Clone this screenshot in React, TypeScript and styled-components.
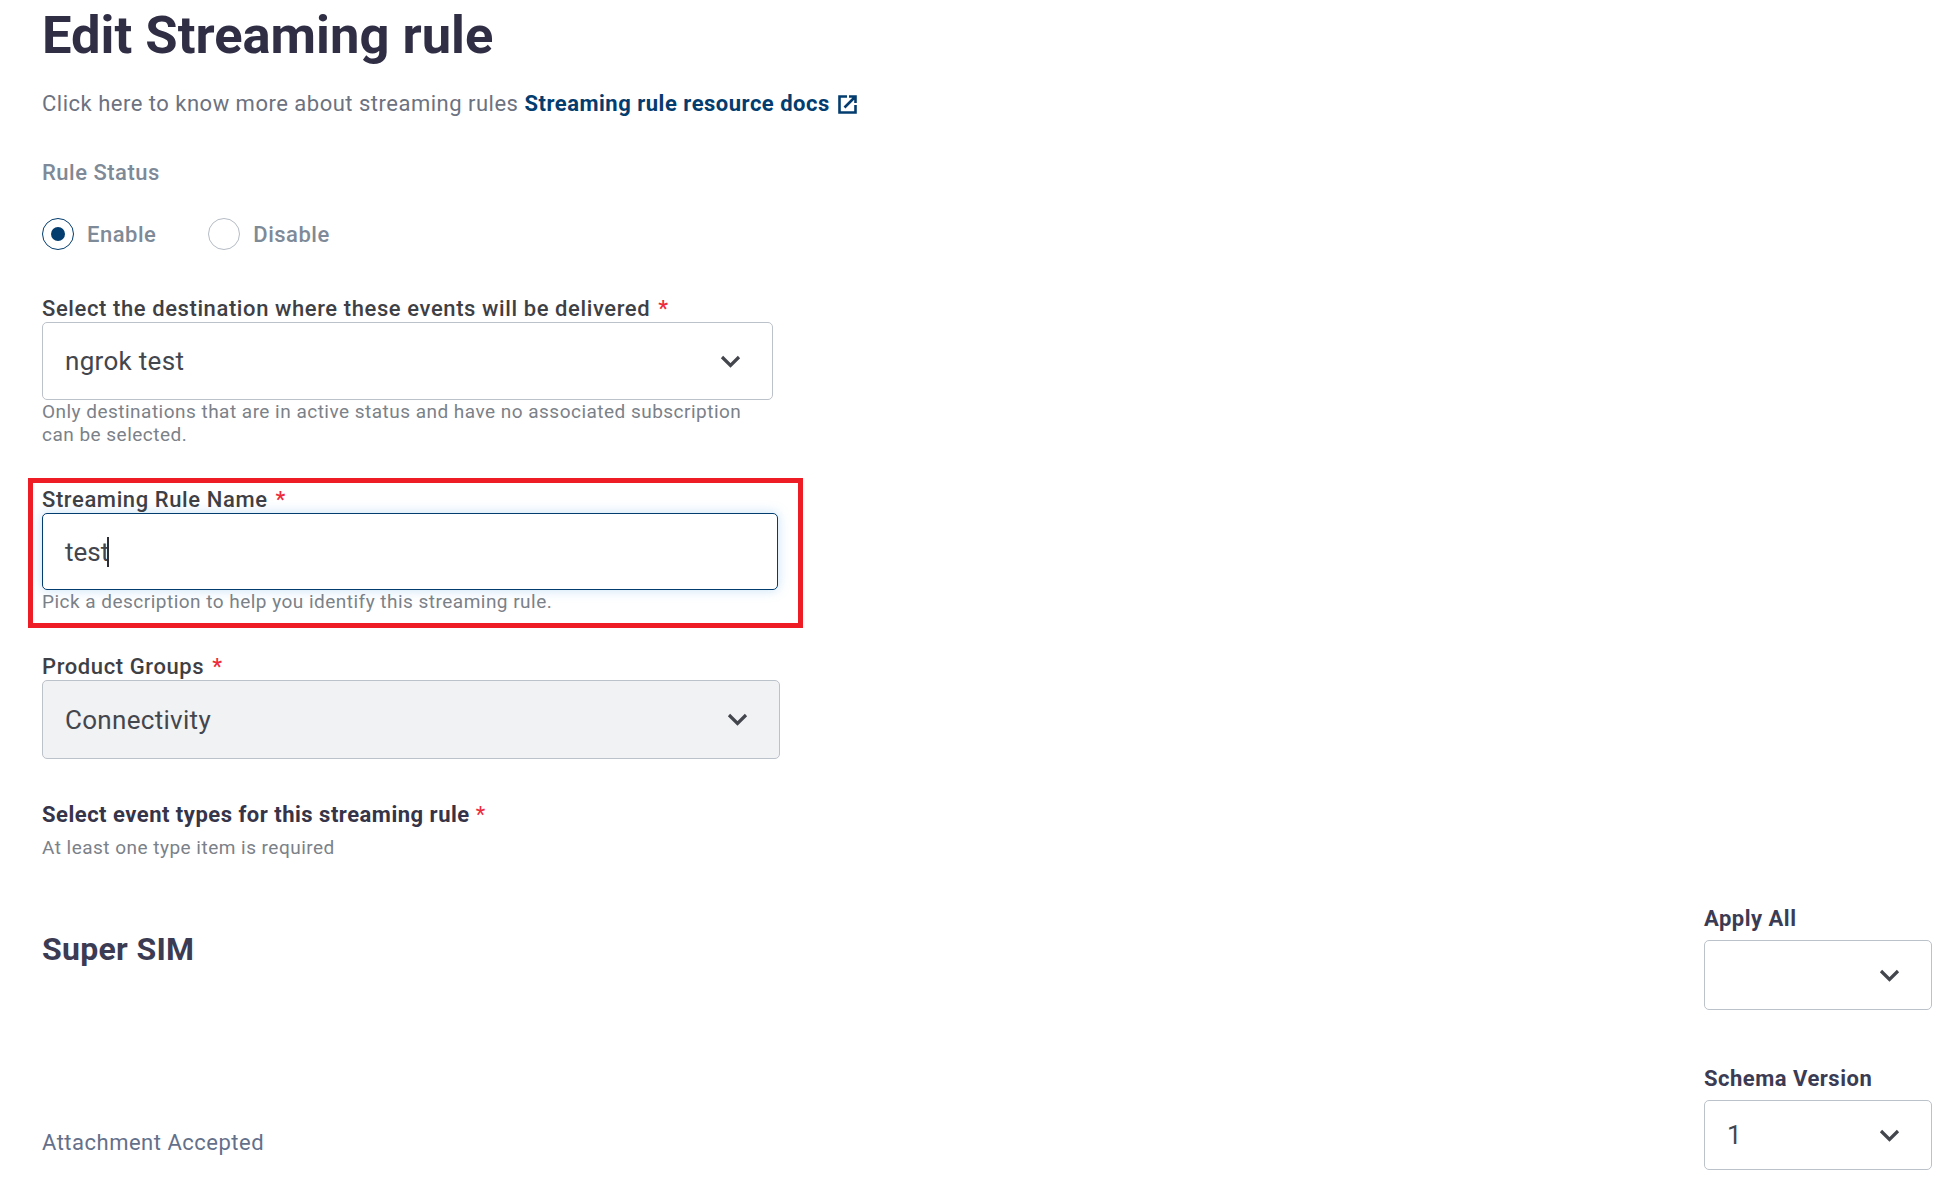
import React from 'react';
import styled, { createGlobalStyle } from 'styled-components';

const GlobalStyle = createGlobalStyle`
  html, body {
    margin: 0;
    padding: 0;
    background: #fff;
    overflow: hidden;
    font-family: Roboto, "Liberation Sans", sans-serif;
  }
`;

const Page = styled.div`
  height: 1181px;
  padding: 0 20px 0 42px;
  box-sizing: border-box;
  overflow: hidden;
`;

const Title = styled.h1`
  margin: 0;
  padding-top: 7px;
  font-size: 52.5px;
  line-height: 56px;
  font-weight: 700;
  color: #2f2e45;
`;

const Intro = styled.p`
  margin: 26px 0 0;
  display: flex;
  align-items: center;
  font-size: 22px;
  line-height: 30px;
  letter-spacing: 0.5px;
  color: #6c7280;
`;

const DocsLink = styled.a`
  display: inline-flex;
  align-items: center;
  margin-left: 6px;
  font-weight: 700;
  color: #033c6e;

  svg {
    margin-left: 8px;
  }
`;

const StatusLabel = styled.div`
  margin-top: 39px;
  font-size: 22px;
  line-height: 30px;
  font-weight: 500;
  letter-spacing: 0.5px;
  color: #7e8a97;
`;

const RadioRow = styled.div`
  display: flex;
  gap: 52px;
  margin-top: 30px;
`;

const RadioOption = styled.label`
  display: flex;
  align-items: center;
  gap: 13px;
  font-size: 22px;
  font-weight: 500;
  letter-spacing: 0.5px;
  color: #7e8a97;
`;

const RadioCircle = styled.span<{ checked?: boolean }>`
  width: 32px;
  height: 32px;
  box-sizing: border-box;
  border-radius: 50%;
  border: 1px solid ${({ checked }) => (checked ? '#033c6e' : '#b5bcc4')};
  display: flex;
  align-items: center;
  justify-content: center;

  &::after {
    content: '';
    display: ${({ checked }) => (checked ? 'block' : 'none')};
    width: 14px;
    height: 14px;
    border-radius: 50%;
    background: #033c6e;
  }
`;

const Field = styled.div<{ width: number; top: number }>`
  position: relative;
  width: ${({ width }) => width}px;
  margin-top: ${({ top }) => top}px;
`;

const FieldLabel = styled.div`
  margin-bottom: 1px;
  font-size: 22px;
  line-height: 24px;
  font-weight: 500;
  letter-spacing: 0.6px;
  color: #3f3f46;
`;

const Required = styled.span`
  margin-left: 8px;
  color: #ee2b3b;
`;

const SelectBox = styled.div<{ height: number; disabled?: boolean }>`
  height: ${({ height }) => height}px;
  box-sizing: border-box;
  display: flex;
  align-items: center;
  justify-content: space-between;
  padding: 0 31px 0 22px;
  border: 1px solid #bcc2c9;
  border-radius: 5px;
  background: ${({ disabled }) => (disabled ? '#f1f2f4' : '#fff')};
  font-size: 26px;
  letter-spacing: 0.3px;
  color: #44464d;
`;

const SelectValue = styled.span`
  flex: 1;
`;

const TextInput = styled.div`
  height: 77px;
  box-sizing: border-box;
  display: flex;
  align-items: center;
  padding: 0 22px;
  border: 1px solid #033c6e;
  border-radius: 5px;
  background: #fff;
  box-shadow: 0 0 12px rgba(90, 170, 230, 0.35);
  font-size: 26px;
  color: #44464d;
`;

const Caret = styled.span`
  width: 2px;
  height: 30px;
  margin-left: -2px;
  background: #2c2c34;
`;

const Hint = styled.div`
  font-size: 19px;
  line-height: 23px;
  letter-spacing: 0.48px;
  color: #7b8188;
`;

const Highlight = styled.div`
  position: absolute;
  top: -10px;
  right: -25px;
  bottom: -15px;
  left: -14px;
  border: 5px solid #ee1c25;
  pointer-events: none;
`;

const SectionLabel = styled.div`
  margin-top: 44px;
  font-size: 22px;
  line-height: 24px;
  font-weight: 700;
  letter-spacing: 0.5px;
  color: #353449;

  span {
    margin-left: 6px;
    font-weight: 400;
    color: #ee2b3b;
  }
`;

const SectionHint = styled(Hint)`
  margin-top: 9px;
`;

const ProductRow = styled.div`
  display: flex;
  justify-content: space-between;
  margin-top: 47px;
`;

const ProductInfo = styled.div`
  display: flex;
  flex-direction: column;
`;

const ProductName = styled.h2`
  margin: 23px 0 0;
  font-size: 32px;
  line-height: 40px;
  font-weight: 700;
  letter-spacing: 0.3px;
  color: #3c3b54;
`;

const EventName = styled.div`
  margin-top: 160px;
  font-size: 22px;
  line-height: 28px;
  letter-spacing: 0.5px;
  color: #64708a;
`;

const Controls = styled.div`
  width: 228px;
  display: flex;
  flex-direction: column;
`;

const ControlLabel = styled.div<{ top?: number }>`
  margin-top: ${({ top }) => top ?? 0}px;
  margin-bottom: 8px;
  font-size: 22px;
  line-height: 26px;
  font-weight: 700;
  letter-spacing: 0.5px;
  color: #3c3b54;
`;

const Chevron = () => (
  <svg width="21" height="13" viewBox="0 0 21 13" fill="none">
    <path d="M2 2l8.5 8.5L19 2" stroke="#44464d" strokeWidth="3.2" />
  </svg>
);

const ExternalLink = () => (
  <svg width="19" height="19" viewBox="0 0 19 19" fill="none" stroke="#033c6e" strokeWidth="2.6">
    <path d="M9 1.5H1.5v16h16V10" />
    <path d="M6.5 12.5L16.5 2.5M11 1.5h6.5V8" />
  </svg>
);

export default function App() {
  return (
    <Page>
      <GlobalStyle />
      <Title>Edit Streaming rule</Title>
      <Intro>
        Click here to know more about streaming rules
        <DocsLink>
          Streaming rule resource docs
          <ExternalLink />
        </DocsLink>
      </Intro>

      <StatusLabel>Rule Status</StatusLabel>
      <RadioRow>
        <RadioOption>
          <RadioCircle checked />
          Enable
        </RadioOption>
        <RadioOption>
          <RadioCircle />
          Disable
        </RadioOption>
      </RadioRow>

      <Field width={731} top={47}>
        <FieldLabel>
          Select the destination where these events will be delivered
          <Required>*</Required>
        </FieldLabel>
        <SelectBox height={78}>
          <SelectValue>ngrok test</SelectValue>
          <Chevron />
        </SelectBox>
        <Hint>
          Only destinations that are in active status and have no associated subscription can be
          selected.
        </Hint>
      </Field>

      <Field width={736} top={42}>
        <FieldLabel>
          Streaming Rule Name
          <Required>*</Required>
        </FieldLabel>
        <TextInput>
          test
          <Caret />
        </TextInput>
        <Hint>Pick a description to help you identify this streaming rule.</Hint>
        <Highlight />
      </Field>

      <Field width={738} top={42}>
        <FieldLabel>
          Product Groups
          <Required>*</Required>
        </FieldLabel>
        <SelectBox height={79} disabled>
          <SelectValue>Connectivity</SelectValue>
          <Chevron />
        </SelectBox>
      </Field>

      <SectionLabel>
        Select event types for this streaming rule<span>*</span>
      </SectionLabel>
      <SectionHint>At least one type item is required</SectionHint>

      <ProductRow>
        <ProductInfo>
          <ProductName>Super SIM</ProductName>
          <EventName>Attachment Accepted</EventName>
        </ProductInfo>
        <Controls>
          <ControlLabel>Apply All</ControlLabel>
          <SelectBox height={70}>
            <SelectValue />
            <Chevron />
          </SelectBox>
          <ControlLabel top={56}>Schema Version</ControlLabel>
          <SelectBox height={70}>
            <SelectValue>1</SelectValue>
            <Chevron />
          </SelectBox>
        </Controls>
      </ProductRow>
    </Page>
  );
}
